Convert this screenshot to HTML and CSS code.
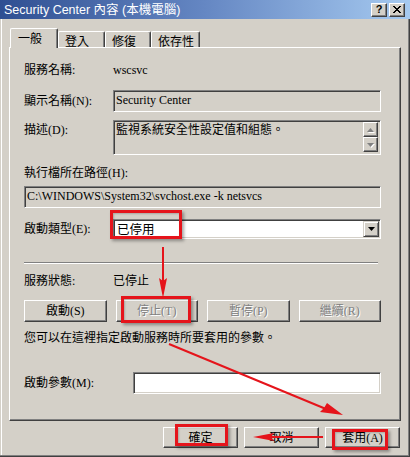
FILE: index.html
```html
<!DOCTYPE html>
<html lang="zh-Hant">
<head>
<meta charset="utf-8">
<title>Security Center 內容</title>
<link rel="stylesheet" href="styles.css">
</head>
<body>
<div class="window">
  <div class="titlebar">
    <span class="title">Security Center 內容 (本機電腦)</span>
    <div class="caption-btns">
      <span class="cbtn help">?</span>
      <span class="cbtn close"><svg width="10" height="9" viewBox="0 0 10 9" shape-rendering="crispEdges"><path d="M1 1h2v1h1v1h2v-1h1v-1h2v1h-1v1h-1v1h-1v1h1v1h1v1h1v1h-2v-1h-1v-1h-2v1h-1v1h-2v-1h1v-1h1v-1h1v-1h-1v-1h-1v-1h-1z" fill="#000"/></svg></span>
    </div>
  </div>
  <div class="client">
    <div class="tabs">
      <div class="tab active">一般</div>
      <div class="tab t2">登入</div>
      <div class="tab t3">修復</div>
      <div class="tab t4">依存性</div>
    </div>
    <div class="panel">
      <div class="row r-name"><span class="label">服務名稱:</span><span class="value">wscsvc</span></div>
      <div class="row r-display"><span class="label">顯示名稱(N):</span><div class="field ro grow">Security Center</div></div>
      <div class="row r-desc"><span class="label top">描述(D):</span>
        <div class="field ro grow memo"><span class="memo-text">監視系統安全性設定值和組態。</span>
          <div class="scrollbar">
            <span class="sbtn"><svg width="7" height="4" viewBox="0 0 7 4"><path d="M3.5 0L7 4H0z" fill="#808080"/></svg></span>
            <span class="sbtn"><svg width="7" height="4" viewBox="0 0 7 4"><path d="M0 0H7L3.5 4z" fill="#808080"/></svg></span>
          </div>
        </div>
      </div>
      <div class="plain r-pathlabel">執行檔所在路徑(H):</div>
      <div class="field ro path">C:\WINDOWS\System32\svchost.exe -k netsvcs</div>
      <div class="row r-start"><span class="label">啟動類型(E):</span>
        <div class="field combo grow"><span class="combo-text">已停用</span>
          <span class="dropbtn"><svg width="7" height="4" viewBox="0 0 7 4"><path d="M0 0H7L3.5 4z" fill="#000"/></svg></span>
        </div>
      </div>
      <div class="sep"></div>
      <div class="row r-status"><span class="label">服務狀態:</span><span class="value">已停止</span></div>
      <div class="btnrow">
        <div class="btn">啟動(S)</div>
        <div class="btn disabled">停止(T)</div>
        <div class="btn disabled">暫停(P)</div>
        <div class="btn disabled">繼續(R)</div>
      </div>
      <div class="plain hint">您可以在這裡指定啟動服務時所要套用的參數。</div>
      <div class="row r-param"><span class="label wide">啟動參數(M):</span><div class="field grow white"></div></div>
    </div>
    <div class="footer">
      <div class="btn fbtn">確定</div>
      <div class="btn fbtn">取消</div>
      <div class="btn fbtn">套用(A)</div>
    </div>
  </div>

  <div class="annot">
    <div class="rbox b1"></div>
    <div class="rbox b2"></div>
    <div class="rbox b3"></div>
    <div class="rbox b4"></div>
    <svg class="arrows" width="410" height="457" viewBox="0 0 410 457">
      <g stroke="#e5141b" stroke-width="2" fill="#e5141b">
        <line x1="163" y1="247" x2="163" y2="282"/>
        <path d="M163 298L159 278L163 281L167 278z" stroke="none"/>
        <line x1="169" y1="344" x2="326" y2="409"/>
        <path d="M343 415L320 412L324 408L327 403z" stroke="none"/>
        <line x1="270" y1="437" x2="323" y2="437"/>
        <path d="M253 437L274 433L271 437L274 441z" stroke="none"/>
      </g>
    </svg>
  </div>
</div>
</body>
</html>
```

FILE: styles.css
```css
* { box-sizing: border-box; }
html, body { margin: 0; padding: 0; }
body {
  width: 410px;
  height: 457px;
  overflow: hidden;
  background: #d4d0c8;
  font-family: "Liberation Serif", "Noto Sans CJK TC", serif;
  font-size: 12px;
  line-height: 14px;
  color: #000;
}
.window {
  position: relative;
  width: 410px;
  height: 457px;
  background: #d4d0c8;
  box-shadow: inset -1px -1px #404040, inset -2px -2px #808080, inset 1px 0 #d4d0c8, inset 2px 0 #fff;
  overflow: hidden;
}
.titlebar {
  height: 19px;
  display: flex;
  align-items: center;
  justify-content: space-between;
  padding: 0 5px 0 4px;
  background: linear-gradient(to right, #2f4f92 0%, #6587c3 50%, #a6caf0 100%);
}
.title {
  color: #fff;
  font-family: "Liberation Sans", "Noto Sans CJK TC", sans-serif;
  font-size: 12.5px;
  line-height: 14px;
  white-space: nowrap;
}
.caption-btns { display: flex; gap: 2px; }
.cbtn {
  width: 16px;
  height: 14px;
  display: flex;
  align-items: center;
  justify-content: center;
  background: #d4d0c8;
  border-top: 1px solid #fff;
  border-left: 1px solid #fff;
  border-right: 1px solid #404040;
  border-bottom: 1px solid #404040;
  box-shadow: inset -1px -1px #808080;
}
.help {
  font-family: "Liberation Sans", sans-serif;
  font-weight: bold;
  font-size: 11px;
  line-height: 12px;
  padding-bottom: 1px;
}
.close svg { display: block; margin-top: -1px; }

.client { padding: 0 9px 0 9px; }
.tabs {
  height: 28px;
  display: flex;
  align-items: flex-end;
  padding-left: 1px;
  position: relative;
  z-index: 2;
}
.tab {
  height: 16px;
  padding: 2px 0 0 6px;
  background: #d4d0c8;
  border-top: 1px solid #fff;
  border-left: 1px solid #fff;
  border-right: 1px solid #404040;
  box-shadow: inset -1px 0 #808080;
  border-radius: 2px 2px 0 0;
  font-family: "Noto Sans CJK TC", sans-serif;
  line-height: 13px;
}
.tab.active {
  width: 48px;
  height: 20px;
  margin-bottom: -1px;
  padding: 2px 0 0 7px;
}
.t2 { width: 47px; }
.t3 { width: 46px; }
.t4 { width: 49px; }

.panel {
  height: 374px;
  border-top: 1px solid #fff;
  border-left: 1px solid #fff;
  border-right: 1px solid #404040;
  border-bottom: 1px solid #404040;
  box-shadow: inset -1px -1px #808080;
  padding: 12px 19px 0 14px;
  display: flex;
  flex-direction: column;
}
.row { display: flex; align-items: center; }
.label { width: 89px; flex: none; white-space: nowrap; }
.label.wide { width: 109px; }
.label.top { align-self: flex-start; padding-top: 3px; }
.grow { flex: 1; }
.r-name { height: 20px; }
.value { white-space: nowrap; }
.r-display { margin-top: 10px; }
.r-desc { margin-top: 8px; }
.r-pathlabel { margin-top: 11px; }
.path { margin-top: 6px; height: 19px; padding: 1px 0 0 2px; }
.r-start { margin-top: 11px; }
.sep {
  margin-top: 23px;
  height: 2px;
  border-top: 1px solid #808080;
  border-bottom: 1px solid #fff;
  margin-right: 3px;
}
.r-status { margin-top: 10px; }
.btnrow { margin-top: 12px; display: flex; gap: 9px; }
.btnrow .btn { flex: 1; height: 22px; }
.hint { margin-top: 9px; white-space: nowrap; }
.r-param { margin-top: 27px; }

.field {
  height: 22px;
  border-top: 1px solid #808080;
  border-left: 1px solid #808080;
  border-right: 1px solid #fff;
  border-bottom: 1px solid #fff;
  box-shadow: inset 1px 1px #404040, inset -1px -1px #d4d0c8;
  padding: 2px 0 0 2px;
  white-space: nowrap;
  background: #fff;
}
.field.ro { background: #d4d0c8; }
.memo {
  height: 35px;
  display: flex;
  justify-content: space-between;
  padding: 1px 2px 2px 2px;
}
.memo-text { padding-top: 1px; }
.scrollbar {
  width: 15px;
  display: flex;
  flex-direction: column;
  justify-content: space-between;
}
.sbtn {
  height: 15px;
  display: flex;
  align-items: center;
  justify-content: center;
  background: #d4d0c8;
  border-top: 1px solid #fff;
  border-left: 1px solid #fff;
  border-right: 1px solid #404040;
  border-bottom: 1px solid #404040;
  box-shadow: inset -1px -1px #808080;
}
.sbtn svg { filter: drop-shadow(1px 1px 0 #fff); }
.combo {
  height: 20px;
  display: flex;
  align-items: center;
  justify-content: space-between;
  padding: 1px 1px 1px 3px;
}
.combo-text { font-family: "Noto Sans CJK TC", sans-serif; font-size: 12.5px; }
.dropbtn {
  width: 16px;
  height: 16px;
  display: flex;
  align-items: center;
  justify-content: center;
  background: #d4d0c8;
  border-top: 1px solid #d4d0c8;
  border-left: 1px solid #d4d0c8;
  border-right: 1px solid #404040;
  border-bottom: 1px solid #404040;
  box-shadow: inset 1px 1px #fff, inset -1px -1px #808080;
}
.btn {
  display: flex;
  align-items: center;
  justify-content: center;
  background: #d4d0c8;
  border-top: 1px solid #fff;
  border-left: 1px solid #fff;
  border-right: 1px solid #404040;
  border-bottom: 1px solid #404040;
  box-shadow: inset -1px -1px #808080;
  white-space: nowrap;
}
.btn.disabled { color: #808080; text-shadow: 1px 1px 0 #fff; }
.footer {
  margin-top: 6px;
  display: flex;
  justify-content: flex-end;
  gap: 6px;
  padding-right: 1px;
}
.fbtn { width: 75px; height: 21px; }

.annot { position: absolute; inset: 0; pointer-events: none; z-index: 5; }
.arrows { position: absolute; left: 0; top: 0; }
.rbox {
  position: absolute;
  border: 3px solid #e5141b;
  box-shadow: 2px 2px 3px rgba(0,0,0,0.35), inset 1px 1px 2px rgba(0,0,0,0.2);
}
.b1 { left: 110px; top: 210px; width: 72px; height: 29px; }
.b2 { left: 121px; top: 296px; width: 70px; height: 27px; }
.b3 { left: 175px; top: 424px; width: 53px; height: 22px; }
.b4 { left: 332px; top: 429px; width: 56px; height: 21px; }
```
